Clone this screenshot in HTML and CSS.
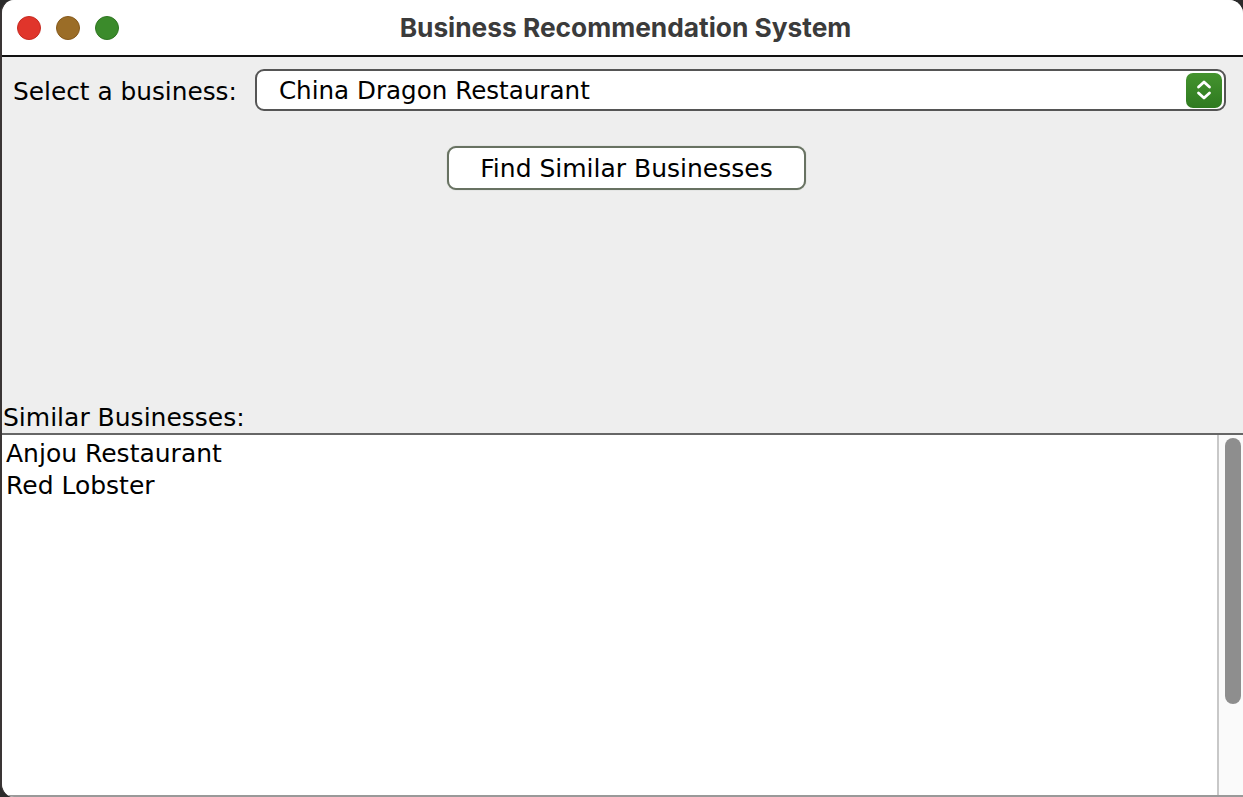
FILE: index.html
```html
<!DOCTYPE html>
<html>
<head>
<meta charset="utf-8">
<link rel="stylesheet" href="styles.css">
</head>
<body>
<div class="window">
  <div class="titlebar">
    <div class="lights">
      <span class="light red"></span>
      <span class="light yellow"></span>
      <span class="light green"></span>
    </div>
    <div class="title">Business Recommendation System</div>
  </div>
  <div class="content">
    <div class="select-row">
      <span class="label">Select a business:</span>
      <div class="combo">
        <span class="combo-text">China Dragon Restaurant</span>
        <span class="combo-btn">
          <svg width="22" height="24" viewBox="0 0 22 24">
            <path d="M5.5 9 L11 4 L16.5 9" fill="none" stroke="#fff" stroke-width="2.8" stroke-linecap="round" stroke-linejoin="round"/>
            <path d="M5.5 15 L11 20 L16.5 15" fill="none" stroke="#fff" stroke-width="2.8" stroke-linecap="round" stroke-linejoin="round"/>
          </svg>
        </span>
      </div>
    </div>
    <div class="btn-row">
      <button class="find-btn">Find Similar Businesses</button>
    </div>
    <div class="spacer"></div>
    <div class="results-label">Similar Businesses:</div>
    <div class="results">
      <div class="results-text">
        <div class="item">Anjou Restaurant</div>
        <div class="item">Red Lobster</div>
      </div>
      <div class="scrollbar">
        <div class="thumb"></div>
      </div>
    </div>
  </div>
</div>
</body>
</html>
```
FILE: styles.css
```css
html, body {
  margin: 0;
  padding: 0;
  width: 1243px;
  height: 797px;
  overflow: hidden;
  background: #2b2b2b;
}
.window {
  width: 1243px;
  height: 797px;
  display: flex;
  flex-direction: column;
  background: #eeeeee;
  border-radius: 14px 14px 0 14px;
  overflow: hidden;
  box-sizing: border-box;
  border-left: 2px solid #3a3535;
}
.titlebar {
  height: 55px;
  flex: none;
  background: #ffffff;
  border-bottom: 2px solid #111;
  display: flex;
  align-items: center;
  position: relative;
}
.lights {
  display: flex;
  gap: 15px;
  padding-left: 15px;
  padding-top: 1px;
}
.light {
  width: 24px;
  height: 24px;
  border-radius: 50%;
  box-sizing: border-box;
}
.light.red { background: #e0352b; border: 1px solid #c72a21; }
.light.yellow { background: #9b6d27; border: 1px solid #86591b; }
.light.green { background: #3b8b2b; border: 1px solid #2f7622; }
.title {
  position: absolute;
  left: 0;
  right: 0;
  top: 0;
  bottom: 0;
  display: flex;
  align-items: center;
  justify-content: center;
  font-family: Inter, "Liberation Sans", sans-serif;
  font-weight: 700;
  font-size: 26.3px;
  color: #3b3b3b;
  padding-left: 6px;
}
.content {
  flex: 1;
  display: flex;
  flex-direction: column;
  font-family: "DejaVu Sans", sans-serif;
  color: #000;
}
.select-row {
  display: flex;
  align-items: center;
  padding: 12px 17px 0 11px;
  gap: 18px;
}
.label {
  font-size: 24.8px;
  padding-top: 2px;
}
.combo {
  flex: 1;
  height: 42px;
  box-sizing: border-box;
  border: 2px solid #555;
  border-radius: 9px;
  background: #fff;
  display: flex;
  align-items: center;
  padding-left: 22px;
  padding-right: 2px;
}
.combo-text {
  flex: 1;
  font-size: 24.6px;
}
.combo-btn {
  width: 36px;
  height: 35px;
  border-radius: 7px;
  background: linear-gradient(#44932e, #2f7a20);
  display: flex;
  align-items: center;
  justify-content: center;
}
.btn-row {
  display: flex;
  justify-content: center;
  padding-top: 35px;
  padding-left: 8px;
}
.find-btn {
  width: 359px;
  height: 44px;
  box-sizing: border-box;
  border: 2px solid #687262;
  border-radius: 9px;
  background: #fff;
  font-family: "DejaVu Sans", sans-serif;
  font-size: 25px;
  color: #000;
  padding: 0;
  box-shadow: 0 0 1px #9aa594;
}
.spacer {
  flex: 1;
}
.results-label {
  font-size: 25px;
  padding-left: 1px;
  height: 30px;
  line-height: 30px;
  border-bottom: 2px solid #666;
}
.results {
  height: 362px;
  flex: none;
  background: #fff;
  display: flex;
  border-bottom: 2px solid #999;
  box-sizing: border-box;
}
.results-text {
  flex: 1;
  padding: 3px 4px;
  font-size: 25px;
  line-height: 32px;
}
.scrollbar {
  width: 26px;
  box-sizing: border-box;
  border-left: 2px solid #c8c8c8;
  background: #fafafa;
  padding: 3px 2px 0 6px;
}
.thumb {
  width: 16px;
  height: 266px;
  border-radius: 8px;
  background: #8e8e8e;
}
```
